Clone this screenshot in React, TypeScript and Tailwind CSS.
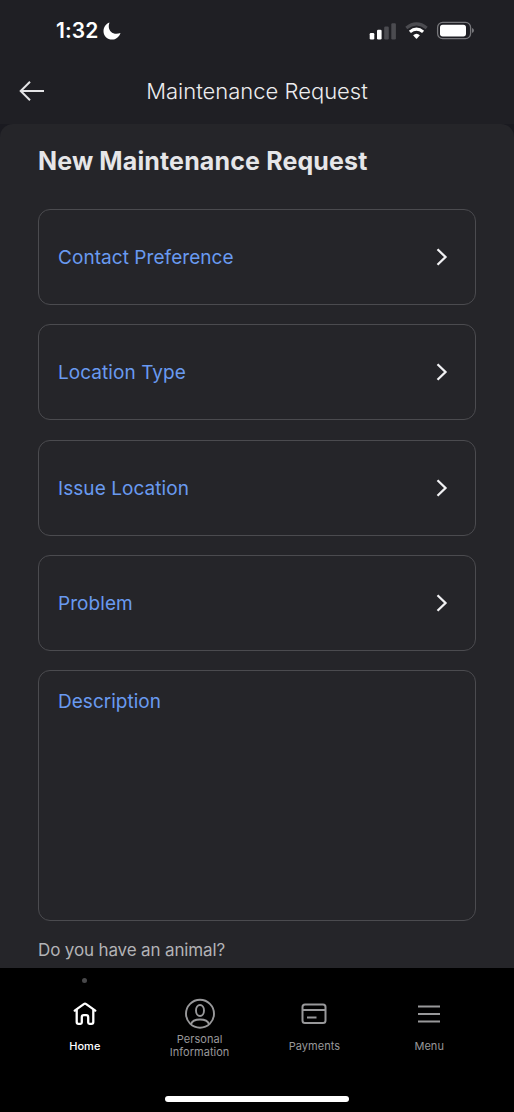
import type { ReactNode } from "react";

const fields = ["Contact Preference", "Location Type", "Issue Location", "Problem"];

function StatusBar() {
  return (
    <div className="flex h-[61px] items-center justify-between pl-[56px] pr-[39px]">
      <div className="flex items-center gap-[5px]">
        <span className="text-[21px] font-semibold leading-[24px] tracking-[0.1px] text-white">1:32</span>
        <svg width="18" height="18" viewBox="0 0 18 18" fill="#fff">
          <path d="M6.500 0.500C5 4.500 6 7.800 8 9.700C10.200 11.900 13.700 12.400 17.500 11C16.200 15 12.900 17.600 9.200 17.600C4.300 17.600 0.500 13.800 0.500 9.200C0.500 5.200 3 1.800 6.500 0.500Z" />
        </svg>
      </div>
      <div className="flex items-center">
        <svg width="27" height="18" viewBox="0 0 27 18">
          <rect x="0.700" y="11" width="4.600" height="6.400" rx="1.200" fill="#fff" />
          <rect x="8" y="7.800" width="4.600" height="9.600" rx="1.200" fill="#fff" />
          <rect x="15.200" y="4.600" width="4.600" height="12.800" rx="1.200" fill="#4b4b50" />
          <rect x="22.300" y="1.200" width="4.600" height="16.200" rx="1.200" fill="#4b4b50" />
        </svg>
        <svg className="ml-[9px]" width="23" height="18" viewBox="0 0 23 18">
          <path d="M1.300 5.900Q11.500 -2 21.700 5.900" fill="none" stroke="#4b4b50" strokeWidth="3.200" />
          <path d="M4.900 9.900Q11.500 4.300 18.100 9.900" fill="none" stroke="#fff" strokeWidth="3.200" />
          <path d="M8.100 13.200Q11.500 10.200 14.900 13.200L12 16.500Q11.500 17 11 16.500Z" fill="#fff" />
        </svg>
        <svg className="ml-[8px]" width="39" height="19" viewBox="0 0 39 19">
          <rect x="1.600" y="1.400" width="33" height="16.200" rx="5" fill="none" stroke="#77777b" strokeWidth="1.300" />
          <rect x="4" y="3.700" width="26" height="11.700" rx="2.700" fill="#fff" />
          <path d="M36 7V12Q38 11.300 38 9.500Q38 7.700 36 7Z" fill="#77777b" />
        </svg>
      </div>
    </div>
  );
}

function NavItem({ label, active, icon }: { label: string; active?: boolean; icon: ReactNode }) {
  return (
    <div className={`relative flex w-[114.800px] flex-col items-center pt-[29px] ${active ? "text-white" : "text-[#98989a]"}`}>
      {active && <span className="absolute top-[10px] size-[5px] rounded-full bg-[#48484a]" />}
      <div className="flex h-[34px] items-center justify-center">{icon}</div>
      <div className={`flex h-[30px] w-[80px] items-center justify-center text-center text-[11px] leading-[13px] ${active ? "font-medium tracking-[0.050px]" : "tracking-[0.030px]"}`}>
        {label}
      </div>
    </div>
  );
}

export default function App() {
  return (
    <div className="flex h-[1112px] w-[514px] flex-col overflow-hidden bg-[#1a1a20] font-[Inter,sans-serif]">
      <header className="h-[124px] shrink-0 bg-[#1f1f24]">
        <StatusBar />
        <div className="grid h-[60px] grid-cols-[70px_1fr_70px] items-center">
          <svg className="ml-[19px]" width="26" height="22" viewBox="0 0 26 22" fill="none" stroke="#e4e4e6" strokeWidth="2">
            <path d="M25 11H2M11 1.700L1.700 11L11 20.300" />
          </svg>
          <h1 className="text-center text-[22px] font-light leading-[28px] text-[#ededef]">Maintenance Request</h1>
        </div>
      </header>

      <main className="h-[844px] shrink-0 overflow-hidden rounded-t-[13px] bg-[#252529] px-[38px] pt-[22px]">
        <h2 className="text-[25px] font-bold leading-[30px] tracking-[0.140px] text-[#e6e6e8]">New Maintenance Request</h2>
        <div className="mt-[33px] flex flex-col gap-[19.250px]">
          {fields.map((field) => (
            <button key={field} className="flex h-[96px] items-center justify-between rounded-[12px] border border-[#4b4b4f] pl-[19px] pr-[27px]">
              <span className="pt-[2px] text-[19px] leading-[24px] tracking-[0.060px] text-[#699af0]">{field}</span>
              <svg width="12" height="18" viewBox="0 0 12 18" fill="none" stroke="#f1f1f3" strokeWidth="2.300">
                <path d="M1.500 1.200L9.500 9L1.500 16.800" />
              </svg>
            </button>
          ))}
          <div className="h-[251px] rounded-[12px] border border-[#4b4b4f] pl-[19px] pt-[19px] text-[19px] leading-[24px] tracking-[0.020px] text-[#699af0]">
            Description
          </div>
        </div>
        <p className="mt-[17px] text-[17px] leading-[24px] tracking-[-0.140px] text-[#b3b3b6]">Do you have an animal?</p>
      </main>

      <nav className="flex h-[144px] shrink-0 flex-col items-center bg-black">
        <div className="flex h-[128px] justify-center">
          <NavItem
            label="Home"
            active
            icon={
              <svg width="24" height="24" viewBox="0 0 24 24" fill="none" stroke="currentColor" strokeWidth="2.300" strokeLinejoin="round" strokeLinecap="round">
                <path d="M1.700 8.600L10.800 2.100Q12 1.300 13.200 2.100L22.300 8.600M3.700 7.500V20Q3.700 21.800 5.500 21.800H7.500Q8.800 21.800 8.800 20.500V15.200Q8.800 13.200 10.800 13.200H13.200Q15.200 13.200 15.200 15.200V20.500Q15.200 21.800 16.500 21.800H18.500Q20.300 21.800 20.300 20V7.500" />
              </svg>
            }
          />
          <NavItem
            label="Personal Information"
            icon={
              <svg width="32" height="32" viewBox="0 0 32 32" fill="none" stroke="currentColor" strokeWidth="1.900">
                <circle cx="16" cy="15.700" r="14" />
                <ellipse cx="16" cy="12.500" rx="4" ry="5.500" />
                <path d="M7 26.200C9 20 23 20 25 26.200" />
              </svg>
            }
          />
          <NavItem
            label="Payments"
            icon={
              <svg width="26" height="22" viewBox="0 0 26 22" fill="none" stroke="currentColor" strokeWidth="2">
                <rect x="1.500" y="1.500" width="23" height="18.500" rx="2.500" />
                <path d="M1.500 7H24.500M6 14.500H15.500" />
              </svg>
            }
          />
          <NavItem
            label="Menu"
            icon={
              <svg width="24" height="22" viewBox="0 0 24 22" fill="none" stroke="currentColor" strokeWidth="2">
                <path d="M1 3.500H23M1 11H23M1 18.500H23" />
              </svg>
            }
          />
        </div>
        <div className="h-[6px] w-[184px] rounded-full bg-white" />
      </nav>
    </div>
  );
}
